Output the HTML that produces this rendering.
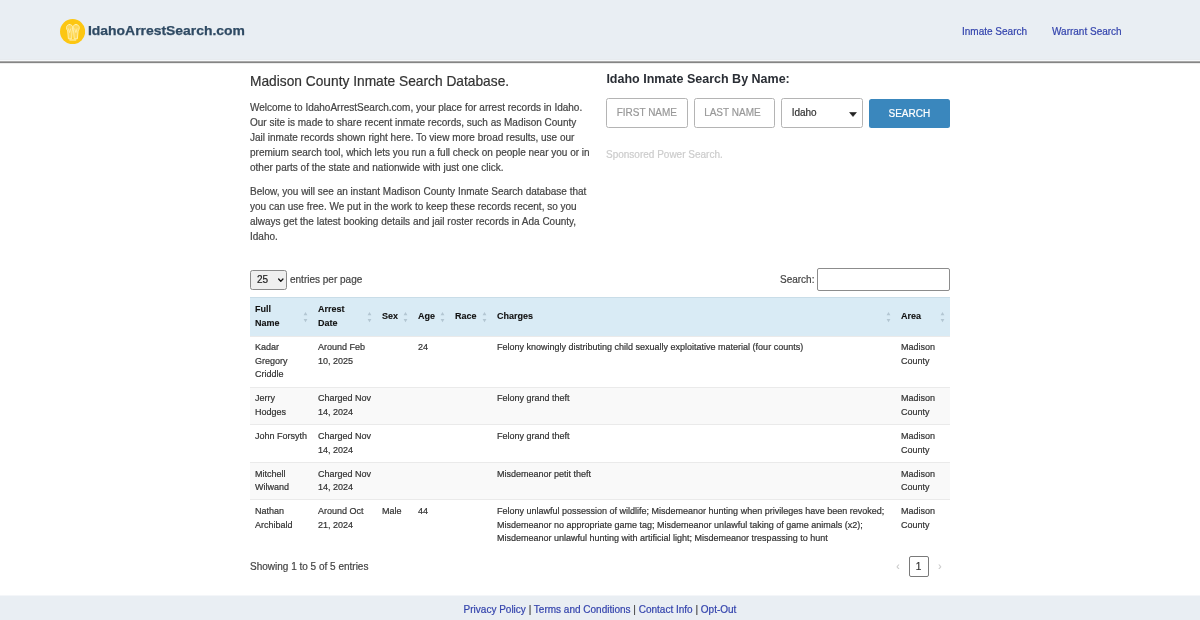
<!DOCTYPE html>
<html lang="en">
<head>
<meta charset="utf-8">
<title>Madison County Inmate Search</title>
<style>
*{box-sizing:border-box;margin:0;padding:0}
html,body{width:1200px;height:620px;overflow:hidden;background:#fff}
body{font-family:"Liberation Sans",sans-serif;font-size:10px;line-height:15px;color:#444;position:relative}
a{color:#3444ad;text-decoration:none}
#hdr{position:absolute;left:0;top:0;width:1200px;height:64px;background:linear-gradient(#e9eef3 0,#e9eef3 59px,#e7ebef 59px,#e7ebef 60px,#f6f8fa 60px,#f6f8fa 61px,#a9a9a9 61px,#a9a9a9 62px,#858585 62px,#858585 63px,#ededed 63px,#ededed 64px)}
#logo-c{position:absolute;left:59.6px;top:18.800px;width:25.2px;height:25.2px}
#logo-t{-webkit-text-stroke:.25px #2f4a63;position:absolute;left:87.9px;top:19.6px;font-weight:bold;font-size:13px;line-height:22px;transform:scaleX(1.07);color:#2f4a63;white-space:nowrap;transform-origin:0 50%}
#nav a{position:absolute;top:23.6px;font-size:10px;line-height:15px;white-space:nowrap}
h1{position:absolute;left:250px;top:71.800px;font-size:13.75px;line-height:20px;font-weight:normal;color:#333;white-space:nowrap}
.p{position:absolute;left:250px;width:342px;color:#444}
h2{-webkit-text-stroke:0;position:absolute;left:606.4px;top:68.5px;font-size:12.5px;line-height:20px;font-weight:bold;color:#2a2e35;white-space:nowrap}
.fi{position:absolute;top:98.3px;width:81.25px;height:29.3px;border:1px solid #b4b4b4;border-radius:2.5px;background:#fff;font-size:10px;line-height:27.3px;padding-left:9.400px;color:#999;white-space:nowrap}
#btn{position:absolute;left:868.75px;top:98.5px;width:81.25px;height:29px;border-radius:2.5px;background:#3a87bd;color:#fff;font-size:10px;line-height:29px;text-align:center}
#spon{position:absolute;left:606px;top:147px;color:#ccc;font-size:10px;line-height:15px}
#len{position:absolute;left:250px;top:270.400px;width:36.800px;height:19.700px;border:1px solid #8a8a8a;border-radius:2.500px;background:#efefef;font-size:10px;line-height:18px;color:#222;padding-left:6px}
#lenl{position:absolute;left:290px;top:272px;line-height:15px;color:#444}
#sl{position:absolute;left:780px;top:272px;line-height:15px;color:#444}
#sb{position:absolute;left:817px;top:268.4px;width:133px;height:22.2px;border:1px solid #8c8c8c;border-radius:2px;background:#fff}
table{position:absolute;left:250px;top:297px;width:700px;border-collapse:separate;border-spacing:0;table-layout:fixed;font-size:9px;line-height:13.5px;color:#333}
th{-webkit-text-stroke:.1px;background:#d9ebf5;font-weight:bold;color:#111;text-align:left;vertical-align:middle;padding:5.3px 16px 5.3px 5px;position:relative;border-top:1px solid #c9dde8}
td{padding:4.8px 5px;vertical-align:top;border-top:1px solid #eaeaea}
tr.e td{background:#f9f9f9}
#info{position:absolute;left:250px;top:558.5px;line-height:15px;color:#444}
#pg{position:absolute;left:908.6px;top:556px;width:20px;height:20.5px;border:1px solid #7a7a7a;border-radius:2px;text-align:center;line-height:19.5px;font-size:10px;color:#333}
.pa{position:absolute;top:559px;font-size:10px;line-height:15px;color:#c8c8c8}
#ftr{position:absolute;left:0;top:595px;width:1200px;height:25px;background:linear-gradient(#f4f6f9 0,#f4f6f9 1px,#e9eef3 1px);text-align:center;line-height:15px;padding-top:7.100px;color:#444}
#wrap{-webkit-text-stroke:.2px;position:absolute;left:0;top:0;width:1200px;height:620px;will-change:transform;overflow:hidden}
.so{position:absolute;right:5.1px;top:50%;width:5px;height:12px;margin-top:-6px}
</style>
</head>
<body>
<div id="wrap">
<div id="hdr">
  <svg id="logo-c" viewBox="0 0 25.2 25.2" width="25.2" height="25.2"><circle cx="12.6" cy="12.6" r="12.6" fill="#fcc612"/><g transform="translate(0 .4)" fill="#fff" fill-opacity=".3" stroke="#fff3b8" stroke-opacity=".9" stroke-width="1" stroke-linecap="round" stroke-linejoin="round"><path d="M9.500 5.100c-1.900 0-3 1.500-3 3.200 0 1.300.6 2.300 1.200 3.200l.7 7.900h3.300l.5-7.900c.5-.9.700-1.900.700-3.200 0-1.700-1.400-3.200-3.400-3.200z"/><path d="M16 5.100c2 0 3.300 1.500 3.300 3.200 0 1.300-.6 2.300-1.200 3.200l-.7 7.900h-3.300l-.5-7.900c-.5-.9-.7-1.900-.7-3.200 0-1.700 1.100-3.200 3.100-3.200z"/><path d="M8.500 9.500l1.100 3.700 1.100-3.700M14.800 9.500l1.100 3.700 1.100-3.700" fill="none" stroke-width=".8"/></g><rect x="9.400" y="20.500" width="6.800" height="1" fill="#fff7d0"/></svg>
  <div id="logo-t">IdahoArrestSearch.com</div>
  <div id="nav"><a style="left:962px">Inmate Search</a><a style="left:1052px">Warrant Search</a></div>
</div>
<h1>Madison County Inmate Search Database.</h1>
<div class="p" style="top:99.5px">Welcome to IdahoArrestSearch.com, your place for arrest records in Idaho. Our site is made to share recent inmate records, such as Madison County Jail inmate records shown right here. To view more broad results, use our premium search tool, which lets you run a full check on people near you or in other parts of the state and nationwide with just one click.</div>
<div class="p" style="top:183.5px">Below, you will see an instant Madison County Inmate Search database that you can use free. We put in the work to keep these records recent, so you always get the latest booking details and jail roster records in Ada County, Idaho.</div>
<h2>Idaho Inmate Search By Name:</h2>
<div class="fi" style="left:606.25px">FIRST NAME</div>
<div class="fi" style="left:693.75px">LAST NAME</div>
<div class="fi" style="left:781.25px;color:#333">Idaho<svg style="position:absolute;left:67px;top:13px" width="8" height="5" viewBox="0 0 8 5"><path d="M.6 .5h6.800L4 4.500z" fill="#222" stroke="#222" stroke-width=".6" stroke-linejoin="round"/></svg></div>
<div id="btn">SEARCH</div>
<div id="spon">Sponsored Power Search.</div>
<div id="len">25<svg style="position:absolute;left:27.300px;top:7px" width="5.600" height="4.700" viewBox="0 0 6 5"><path d="M.7 1l2.300 2.600L5.300 1" fill="none" stroke="#111" stroke-width="1.400" stroke-linecap="round" stroke-linejoin="round"/></svg></div><div id="lenl">entries per page</div>
<div id="sl">Search:</div><div id="sb"></div>
<table>
<colgroup><col style="width:63px"><col style="width:64px"><col style="width:36px"><col style="width:37px"><col style="width:42px"><col style="width:404px"><col style="width:54px"></colgroup>
<tr><th>Full Name<svg class="so" viewBox="0 0 5 12"><path d="M.6 4.300L2.500 1 4.400 4.300zM.6 7.900L2.500 11.300 4.400 7.900z" fill="#b3c6d2"/></svg></th><th>Arrest Date<svg class="so" viewBox="0 0 5 12"><path d="M.6 4.300L2.500 1 4.400 4.300zM.6 7.900L2.500 11.300 4.400 7.900z" fill="#b3c6d2"/></svg></th><th>Sex<svg class="so" viewBox="0 0 5 12"><path d="M.6 4.300L2.500 1 4.400 4.300zM.6 7.900L2.500 11.300 4.400 7.900z" fill="#b3c6d2"/></svg></th><th>Age<svg class="so" viewBox="0 0 5 12"><path d="M.6 4.300L2.500 1 4.400 4.300zM.6 7.900L2.500 11.300 4.400 7.900z" fill="#b3c6d2"/></svg></th><th>Race<svg class="so" viewBox="0 0 5 12"><path d="M.6 4.300L2.500 1 4.400 4.300zM.6 7.900L2.500 11.300 4.400 7.900z" fill="#b3c6d2"/></svg></th><th>Charges<svg class="so" viewBox="0 0 5 12"><path d="M.6 4.300L2.500 1 4.400 4.300zM.6 7.900L2.500 11.300 4.400 7.900z" fill="#b3c6d2"/></svg></th><th>Area<svg class="so" viewBox="0 0 5 12"><path d="M.6 4.300L2.500 1 4.400 4.300zM.6 7.900L2.500 11.300 4.400 7.900z" fill="#b3c6d2"/></svg></th></tr>
<tr><td>Kadar Gregory Criddle</td><td>Around Feb 10, 2025</td><td></td><td>24</td><td></td><td>Felony knowingly distributing child sexually exploitative material (four counts)</td><td>Madison County</td></tr>
<tr class="e"><td>Jerry Hodges</td><td>Charged Nov 14, 2024</td><td></td><td></td><td></td><td>Felony grand theft</td><td>Madison County</td></tr>
<tr><td>John Forsyth</td><td>Charged Nov 14, 2024</td><td></td><td></td><td></td><td>Felony grand theft</td><td>Madison County</td></tr>
<tr class="e"><td>Mitchell Wilwand</td><td>Charged Nov 14, 2024</td><td></td><td></td><td></td><td>Misdemeanor petit theft</td><td>Madison County</td></tr>
<tr><td>Nathan Archibald</td><td>Around Oct 21, 2024</td><td>Male</td><td>44</td><td></td><td>Felony unlawful possession of wildlife; Misdemeanor hunting when privileges have been revoked; Misdemeanor no appropriate game tag; Misdemeanor unlawful taking of game animals (x2); Misdemeanor unlawful hunting with artificial light; Misdemeanor trespassing to hunt</td><td>Madison County</td></tr>
</table>
<div id="info">Showing 1 to 5 of 5 entries</div>
<div class="pa" style="left:896.2px">‹</div><div id="pg">1</div><div class="pa" style="left:938.2px">›</div>
<div id="ftr"><a>Privacy Policy</a> | <a>Terms and Conditions</a> | <a>Contact Info</a> | <a>Opt-Out</a></div>
</div>
</body>
</html>
